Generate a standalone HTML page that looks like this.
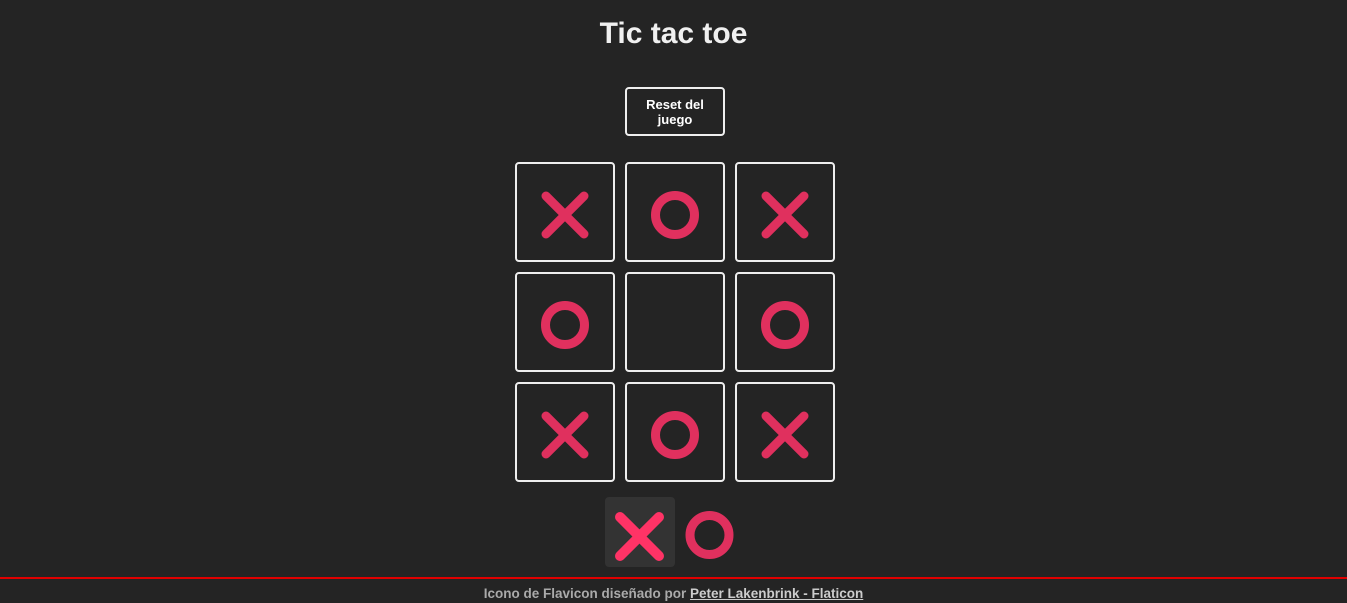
<!DOCTYPE html>
<html><head><meta charset="utf-8"><style>
html,body{margin:0;padding:0;background:#242424;width:1347px;height:603px;overflow:hidden;font-family:"Liberation Sans",Arial,sans-serif}
h1{position:absolute;top:17px;left:0;width:1347px;margin:0;text-align:center;color:#f0f0f0;font-size:30px;font-weight:bold;font-family:"Liberation Sans",sans-serif}
.btn{position:absolute;left:625px;top:87px;width:96px;height:45px;border:2px solid #eee;border-radius:4px;color:#fff;font-size:13px;font-weight:bold;text-align:center;display:flex;align-items:center;justify-content:center;line-height:15px}
.line{position:absolute;left:0;top:577px;width:1347px;height:2px;background:#e00000}
.foot{position:absolute;top:586px;left:0;width:1347px;text-align:center;color:#aaa;font-size:13.5px;font-weight:bold}
.foot a{color:#ccc;text-decoration:underline}
svg{position:absolute;left:0;top:0}
</style></head><body>
<h1>Tic tac toe</h1>
<div class="btn">Reset del<br>juego</div>
<svg width="1347" height="603">
<defs>
<g id="x"><path d="M-19,-19L19,19M19,-19L-19,19" stroke="#e0305e" stroke-width="9" stroke-linecap="round"/></g>
<g id="o"><circle r="19.5" fill="none" stroke="#e0305e" stroke-width="9"/></g>
</defs>
<g fill="none" stroke="#eee" stroke-width="2">
<rect x="516" y="163" width="98" height="98" rx="3"/><rect x="626" y="163" width="98" height="98" rx="3"/><rect x="736" y="163" width="98" height="98" rx="3"/>
<rect x="516" y="273" width="98" height="98" rx="3"/><rect x="626" y="273" width="98" height="98" rx="3"/><rect x="736" y="273" width="98" height="98" rx="3"/>
<rect x="516" y="383" width="98" height="98" rx="3"/><rect x="626" y="383" width="98" height="98" rx="3"/><rect x="736" y="383" width="98" height="98" rx="3"/>
</g>
<use href="#x" x="565" y="215"/><use href="#o" x="675" y="215"/><use href="#x" x="785" y="215"/>
<use href="#o" x="565" y="325"/><use href="#o" x="785" y="325"/>
<use href="#x" x="565" y="435"/><use href="#o" x="675" y="435"/><use href="#x" x="785" y="435"/>
<rect x="605" y="497" width="70" height="70" rx="4" fill="#333"/>
<path d="M620,517L659,556M659,517L620,556" stroke="#ff3366" stroke-width="10" stroke-linecap="round"/>
<circle cx="709.5" cy="535" r="19.5" fill="none" stroke="#e0305e" stroke-width="9"/>
</svg>
<div class="line"></div>
<div class="foot">Icono de Flavicon diseñado por <a>Peter Lakenbrink - Flaticon</a></div>
</body></html>
